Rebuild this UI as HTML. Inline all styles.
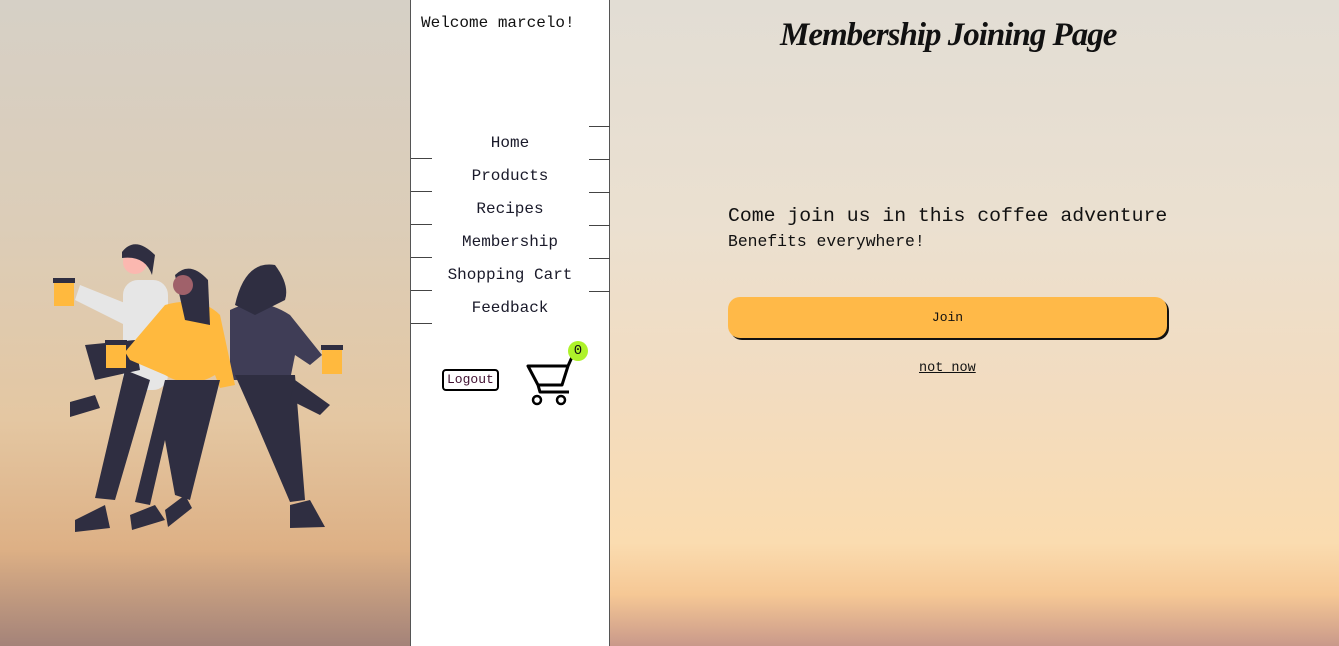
<!DOCTYPE html>
<html><head><meta charset="utf-8"><style>
*{margin:0;padding:0;box-sizing:border-box}
body{width:1339px;height:646px;overflow:hidden;position:relative;font-family:"Liberation Mono",monospace;color:#111;
background:linear-gradient(180deg,#e2ddd4 0%,#ebe0d0 35%,#f2dcc0 60%,#fadcb0 84%,#f6c895 92%,#c9998a 100%);}
.left{position:absolute;left:0;top:0;width:410px;height:646px;background:linear-gradient(180deg,#d6d0c6 0%,#dccdb8 35%,#e4c7a2 65%,#ddb085 85%,#a48379 100%)}
.side{position:absolute;left:410px;top:0;width:200px;height:646px;background:#fff;border-left:1px solid #555;border-right:1px solid #555}
.welcome{position:absolute;left:10px;top:14px;font-size:16px}
.nav{position:absolute;left:0;top:127px;width:198px}
.nav div{height:33px;line-height:33px;text-align:center;font-size:16px;color:#1a1a2a;position:relative}
.hl{position:absolute;height:1px;background:#444;width:21px}
.logout{position:absolute;left:31px;top:369px;border:2px solid #000;border-radius:4px;font-size:13px;padding:1px 3px;line-height:16px;color:#401030}
.badge{position:absolute;left:157px;top:341px;width:20px;height:20px;border-radius:50%;background:#aef22a;font-size:14px;text-align:center;line-height:20px}
h1{position:absolute;left:780px;top:17px;font-family:"Liberation Serif",cursive;font-style:italic;font-weight:bold;font-size:33px;letter-spacing:-1px;color:#111}
.t1{position:absolute;left:728px;top:205px;font-size:19.8px}
.t2{position:absolute;left:728px;top:232px;font-size:16.4px}
.join{position:absolute;left:728px;top:297px;width:439px;height:41px;background:#ffb948;border-radius:12px;box-shadow:2px 2px 0 #111;text-align:center;line-height:41px;font-size:13px}
.nn{position:absolute;left:919px;top:361px;font-size:13.5px;text-decoration:underline}
</style></head><body>
<div class="left"></div>
<svg style="position:absolute;left:40px;top:230px" width="320" height="310" viewBox="0 0 320 310">
<rect x="83" y="50" width="45" height="110" rx="15" fill="#e6e6e6"/>
<path d="M35 70 L85 95 L90 75 L40 55Z" fill="#e6e6e6"/>
<circle cx="95" cy="32" r="12" fill="#fbb8b0"/>
<path d="M82 22 Q95 5 115 25 L112 45 Q105 25 82 28Z" fill="#2f2e41"/>
<path d="M45 115 L95 110 L100 140 L55 150Z" fill="#2f2e41"/>
<path d="M85 140 L110 150 L75 270 L55 268Z" fill="#2f2e41"/>
<path d="M30 172 L55 165 L60 178 L30 187Z" fill="#2f2e41"/>
<path d="M35 290 L65 275 L70 298 L35 302Z" fill="#2f2e41"/>
<rect x="14" y="50" width="20" height="26" fill="#ffb93e"/><rect x="13" y="48" width="22" height="5" fill="#2f2e41"/>
<rect x="66" y="112" width="20" height="26" fill="#ffb93e"/><rect x="65" y="110" width="22" height="5" fill="#2f2e41"/>
<path d="M190 80 Q220 65 250 85 L282 125 L270 135 L255 125 L250 150 L190 150Z" fill="#3f3d56"/>
<circle cx="230" cy="52" r="13" fill="#fbb8b0"/>
<path d="M195 75 Q205 30 235 35 Q250 55 245 70 L215 85Z" fill="#2f2e41"/>
<path d="M195 145 L255 145 L265 270 L250 272 L215 190Z" fill="#2f2e41"/>
<path d="M255 150 L290 175 L280 185 L250 170Z" fill="#2f2e41"/>
<path d="M250 275 L270 270 L285 297 L250 298Z" fill="#2f2e41"/>
<rect x="282" y="118" width="20" height="26" fill="#ffb93e"/><rect x="281" y="115" width="22" height="5" fill="#2f2e41"/>
<path d="M125 75 Q160 65 180 85 L195 155 L180 158 L175 145 Q150 160 125 145 L90 130 L85 122Z" fill="#ffb93e"/>
<path d="M135 45 Q150 30 168 50 L170 95 L145 90Z" fill="#2f2e41"/>
<circle cx="143" cy="55" r="10" fill="#a0616a"/>
<path d="M125 150 L180 150 L150 270 L135 265 L125 210 L110 275 L95 272Z" fill="#2f2e41"/>
<path d="M90 285 L115 275 L125 290 L92 300Z" fill="#2f2e41"/>
<path d="M125 280 L145 265 L152 278 L128 297Z" fill="#2f2e41"/>
</svg>
<div class="side">
<div class="welcome">Welcome marcelo!</div>
<div class="nav"><div>Home</div><div>Products</div><div>Recipes</div><div>Membership</div><div>Shopping Cart</div><div>Feedback</div></div>
<div class="hl" style="left:0;top:158px"></div><div class="hl" style="left:0;top:191px"></div><div class="hl" style="left:0;top:224px"></div><div class="hl" style="left:0;top:257px"></div><div class="hl" style="left:0;top:290px"></div><div class="hl" style="left:0;top:323px"></div>
<div class="hl" style="left:178px;top:126px"></div><div class="hl" style="left:178px;top:159px"></div><div class="hl" style="left:178px;top:192px"></div><div class="hl" style="left:178px;top:225px"></div><div class="hl" style="left:178px;top:258px"></div><div class="hl" style="left:178px;top:291px"></div>
<div class="logout">Logout</div>
<svg style="position:absolute;left:115px;top:355px" width="50" height="52" viewBox="0 0 50 52">
<path d="M2 11 H42 L36 30 H12 Z M42 11 L46 2 M12 30 L14 37 H43" fill="none" stroke="#000" stroke-width="3" stroke-linejoin="round"/>
<circle cx="11" cy="45" r="4" fill="none" stroke="#000" stroke-width="2.5"/><circle cx="35" cy="45" r="4" fill="none" stroke="#000" stroke-width="2.5"/>
</svg>
<div class="badge">0</div>
</div>
<h1>Membership Joining Page</h1>
<div class="t1">Come join us in this coffee adventure</div>
<div class="t2">Benefits everywhere!</div>
<div class="join">Join</div>
<div class="nn">not now</div>
</body></html>
